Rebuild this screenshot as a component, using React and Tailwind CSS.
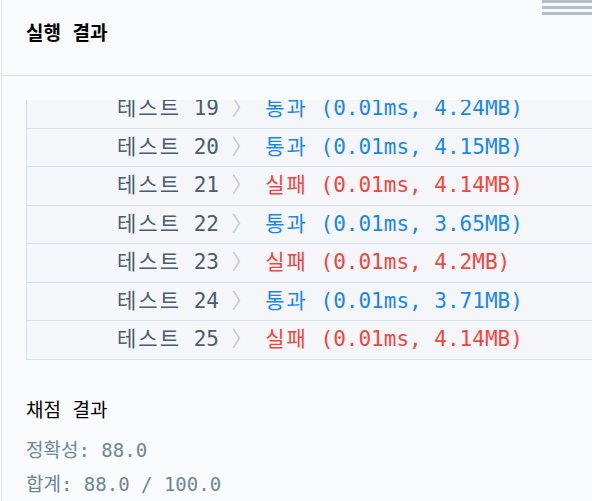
import React from 'react';

const rows = [
  { no: 19, pass: true, time: '0.01ms', mem: '4.24MB' },
  { no: 20, pass: true, time: '0.01ms', mem: '4.15MB' },
  { no: 21, pass: false, time: '0.01ms', mem: '4.14MB' },
  { no: 22, pass: true, time: '0.01ms', mem: '3.65MB' },
  { no: 23, pass: false, time: '0.01ms', mem: '4.2MB' },
  { no: 24, pass: true, time: '0.01ms', mem: '3.71MB' },
  { no: 25, pass: false, time: '0.01ms', mem: '4.14MB' },
];

const mono = { fontFamily: '"DejaVu Sans Mono", "Noto Sans CJK KR", monospace' };

// hangul in the fallback font runs a bit narrower than the reference, so space it out
const Ko = ({ children }) => <span className="tracking-[2px]">{children}</span>;

const ResultRow = ({ row }) => (
  <div className="flex items-center h-[38.5px] border-b border-[#d8e2ec] pl-[90px] whitespace-pre text-[21px] leading-none">
    <span className="text-[#4a5c70]"><Ko>테스트</Ko> {row.no} </span>
    <span className="text-[#c4c9d0]">〉</span>
    <span className={row.pass ? 'text-[#1a86f0]' : 'text-[#f2453d]'}>
      {' '}<Ko>{row.pass ? '통과' : '실패'}</Ko> ({row.time}, {row.mem})
    </span>
  </div>
);

export default function App() {
  return (
    <div className="w-[592px] h-[501px] overflow-hidden bg-[#fafbfd] flex" style={mono}>
      <div className="w-px ml-px bg-[#dfe4ea]" />
      <div className="flex-1 flex flex-col min-w-0">
        <div className="relative h-[76px] border-b border-[#dfe4ea] bg-[#f9fafc] pl-6 flex items-center">
          <h2 className="text-[19px] font-bold text-black -mt-2">실행 결과</h2>
          <div className="absolute right-0 top-0 w-[50px] flex flex-col gap-[3px]">
            <span className="h-[3px] bg-[#b3c0c8]" />
            <span className="h-[3px] bg-[#b3c0c8]" />
            <span className="h-[3px] bg-[#b3c0c8]" />
          </div>
        </div>

        <div className="pt-6 pl-6">
          <div className="overflow-hidden">
            <div className="-mt-[10px] border-l border-[#d8e2ec] bg-[#f5f6fa]">
              {rows.map(row => (
                <ResultRow key={row.no} row={row} />
              ))}
            </div>
          </div>

          <div className="mt-[38px] text-[19px] leading-[24px] text-black">채점 결과</div>
          <div className="mt-[16px] text-[19px] leading-[24px] text-[#6c8799]">정확성: 88.0</div>
          <div className="mt-[10px] text-[19px] leading-[24px] text-[#6c8799]">합계: 88.0 / 100.0</div>
        </div>
      </div>
    </div>
  );
}
